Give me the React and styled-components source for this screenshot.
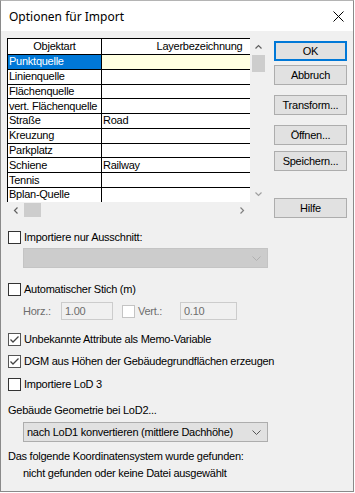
import styled, { createGlobalStyle } from "styled-components";

const GlobalStyle = createGlobalStyle`
  body {
    margin: 0;
    background: #ffffff;
    font-family: "Liberation Sans", Arial, sans-serif;
    font-size: 11px;
    letter-spacing: -0.25px;
    color: #000;
  }
`;

const Window = styled.div`
  box-sizing: border-box;
  width: 354px;
  height: 492px;
  border: 1px solid #8a8a8a;
  border-top-color: #b4b4b4;
  display: flex;
  flex-direction: column;
  background: #f0f0f0;
`;

const TitleBar = styled.div`
  height: 30px;
  background: #ffffff;
  display: flex;
  align-items: center;
  justify-content: space-between;
  padding: 0 9px 0 8px;
`;

const Title = styled.span`
  font-family: "Segoe UI", "Noto Sans", sans-serif;
  font-size: 12px;
  letter-spacing: 0;
  color: #000;
`;

const Client = styled.div`
  flex: 1;
  padding: 7px 0 0 6px;
  display: flex;
  flex-direction: column;
`;

const TopRow = styled.div`
  display: flex;
  gap: 7px;
`;

const GridBox = styled.div`
  width: 260px;
  height: 180px;
  display: grid;
  grid-template-columns: 243px 17px;
  grid-template-rows: 164px 16px;
`;

const GridBody = styled.div`
  background: #ffffff;
  overflow: hidden;
`;

const Row = styled.div`
  display: flex;
  box-sizing: border-box;
  height: ${(p) => (p.$header ? "17px" : "14.78px")};
  border-top: ${(p) => (p.$header ? "1px solid #000" : "none")};
  border-bottom: 1px solid #000;
  width: 300px;
`;

const Cell = styled.div`
  box-sizing: border-box;
  flex: none;
  width: ${(p) => (p.$first ? "95px" : "200px")};
  border-left: ${(p) => (p.$first ? "1px solid #000" : "none")};
  border-right: ${(p) => (p.$first ? "1px solid #000" : "none")};
  padding-left: ${(p) => (p.$center ? "0" : "1px")};
  display: flex;
  align-items: center;
  justify-content: ${(p) => (p.$center ? "center" : "flex-start")};
  line-height: 13px;
  white-space: nowrap;
  overflow: hidden;
  background: ${(p) => p.$bg || "transparent"};
  color: ${(p) => p.$color || "#000"};
`;

const VScroll = styled.div`
  background: #f0f0f0;
  display: flex;
  flex-direction: column;
  align-items: center;
`;

const HScroll = styled.div`
  background: #f0f0f0;
  display: flex;
  align-items: center;
`;

const ArrowCell = styled.div`
  flex: none;
  width: 17px;
  height: ${(p) => (p.$h ? p.$h : "17px")};
  display: flex;
  align-items: center;
  justify-content: center;
`;

const VThumb = styled.div`
  width: 13px;
  height: 17px;
  background: #cdcdcd;
`;

const HThumb = styled.div`
  width: 17px;
  height: 14px;
  background: #cdcdcd;
`;

const Spacer = styled.div`
  flex: 1;
`;

const Corner = styled.div`
  background: #f0f0f0;
`;

const ButtonCol = styled.div`
  display: flex;
  flex-direction: column;
  padding-top: 3px;
`;

const Button = styled.div`
  box-sizing: border-box;
  width: 73px;
  height: 20px;
  margin-top: ${(p) => p.$mt || 0}px;
  background: #e1e1e1;
  border: ${(p) => (p.$default ? "2px solid #0078d7" : "1px solid #adadad")};
  display: flex;
  align-items: center;
  justify-content: center;
  color: #000;
`;

const Options = styled.div`
  display: flex;
  flex-direction: column;
  padding-left: 1px;
`;

const CheckRow = styled.div`
  display: flex;
  align-items: center;
  gap: 3px;
  height: 13px;
  margin-top: ${(p) => p.$mt || 0}px;
  line-height: 13px;
`;

const Box = styled.div`
  box-sizing: border-box;
  flex: none;
  width: ${(p) => p.$size || 13}px;
  height: ${(p) => p.$size || 13}px;
  background: #ffffff;
  border: 1px solid ${(p) => p.$border || "#333333"};
  display: flex;
  align-items: center;
  justify-content: center;
`;

const Combo = styled.div`
  box-sizing: border-box;
  width: 245px;
  height: 20px;
  margin: ${(p) => p.$mt || 0}px 0 0 15px;
  background: ${(p) => (p.$disabled ? "#cccccc" : "#e1e1e1")};
  border: 1px solid ${(p) => (p.$disabled ? "#c4c4c4" : "#adadad")};
  display: flex;
  align-items: center;
  justify-content: space-between;
  padding: 0 6px 0 3px;
  white-space: nowrap;
`;

const StitchRow = styled.div`
  display: flex;
  align-items: center;
  height: 18px;
  margin: 6px 0 0 15px;
  color: #6d6d6d;
`;

const FieldLabel = styled.span`
  width: ${(p) => p.$w}px;
  flex: none;
`;

const Field = styled.div`
  box-sizing: border-box;
  flex: none;
  width: ${(p) => p.$w}px;
  height: 18px;
  border: 1px solid #cccccc;
  background: #f0f0f0;
  padding-left: 3px;
  display: flex;
  align-items: center;
  color: #6d6d6d;
`;

const Text = styled.div`
  line-height: 13px;
  margin: ${(p) => p.$mt || 0}px 0 0 ${(p) => p.$ml || 0}px;
  white-space: nowrap;
`;

const Chevron = ({ dir = "down", color = "#606060" }) => {
  const pts = {
    up: "0.5,4.5 3.5,1.5 6.5,4.5",
    down: "0.5,1.5 3.5,4.5 6.5,1.5",
    left: "4.5,0.5 1.5,3.5 4.5,6.5",
    right: "1.5,0.5 4.5,3.5 1.5,6.5",
  }[dir];
  const vertical = dir === "up" || dir === "down";
  return (
    <svg width={vertical ? 7 : 6} height={vertical ? 6 : 7} viewBox={vertical ? "0 0 7 6" : "0 0 6 7"}>
      <polyline points={pts} fill="none" stroke={color} strokeWidth="1.2" />
    </svg>
  );
};

const ComboArrow = ({ color }) => (
  <svg width="9" height="5" viewBox="0 0 9 5">
    <polyline points="0.5,0.5 4.5,4.5 8.5,0.5" fill="none" stroke={color} strokeWidth="1" />
  </svg>
);

const CloseIcon = () => (
  <svg width="11" height="11" viewBox="0 0 11 11">
    <path d="M0.5 0.5 L10.5 10.5 M10.5 0.5 L0.5 10.5" stroke="#000" strokeWidth="1" />
  </svg>
);

const Check = ({ color = "#444" }) => (
  <svg width="11" height="11" viewBox="0 0 11 11">
    <polyline points="1.5,5.5 4,8 9.5,2.5" fill="none" stroke={color} strokeWidth="1.3" />
  </svg>
);

const rows = [
  ["Punktquelle", ""],
  ["Linienquelle", ""],
  ["Flächenquelle", ""],
  ["vert. Flächenquelle", ""],
  ["Straße", "Road"],
  ["Kreuzung", ""],
  ["Parkplatz", ""],
  ["Schiene", "Railway"],
  ["Tennis", ""],
  ["Bplan-Quelle", ""],
];

const CheckOption = ({ checked, mt, children }) => (
  <CheckRow $mt={mt}>
    <Box $border={checked ? "#555" : "#333"}>{checked && <Check />}</Box>
    <span>{children}</span>
  </CheckRow>
);

const App = () => {
  return (
    <>
      <GlobalStyle />
      <Window>
        <TitleBar>
          <Title>Optionen für Import</Title>
          <CloseIcon />
        </TitleBar>
        <Client>
          <TopRow>
            <GridBox>
              <GridBody>
                <Row $header>
                  <Cell $first $center>Objektart</Cell>
                  <Cell $center style={{ width: 195 }}>Layerbezeichnung</Cell>
                </Row>
                {rows.map(([name, layer], i) => (
                  <Row key={name}>
                    <Cell $first $bg={i === 0 ? "#0078d7" : undefined} $color={i === 0 ? "#fff" : undefined}>
                      {name}
                    </Cell>
                    <Cell $bg={i === 0 ? "#ffffe1" : undefined}>{layer}</Cell>
                  </Row>
                ))}
              </GridBody>
              <VScroll>
                <ArrowCell>
                  <Chevron dir="up" />
                </ArrowCell>
                <VThumb />
                <Spacer />
                <ArrowCell>
                  <Chevron dir="down" color="#a0a0a0" />
                </ArrowCell>
              </VScroll>
              <HScroll>
                <ArrowCell $h="16px">
                  <Chevron dir="left" />
                </ArrowCell>
                <HThumb />
                <Spacer />
                <ArrowCell $h="16px">
                  <Chevron dir="right" color="#808080" />
                </ArrowCell>
              </HScroll>
              <Corner />
            </GridBox>
            <ButtonCol>
              <Button $default>OK</Button>
              <Button $mt={4}>Abbruch</Button>
              <Button $mt={10}>Transform...</Button>
              <Button $mt={10}>Öffnen...</Button>
              <Button $mt={6}>Speichern...</Button>
              <Button $mt={27}>Hilfe</Button>
            </ButtonCol>
          </TopRow>
          <Options>
            <CheckOption mt={13}>Importiere nur Ausschnitt:</CheckOption>
            <Combo $disabled $mt={4}>
              <span />
              <ComboArrow color="#b0b0b0" />
            </Combo>
            <CheckOption mt={15}>Automatischer Stich (m)</CheckOption>
            <StitchRow>
              <FieldLabel $w={38}>Horz.:</FieldLabel>
              <Field $w={52}>1.00</Field>
              <Box $size={13} $border="#c4c4c4" style={{ marginLeft: 9 }} />
              <FieldLabel $w={42} style={{ paddingLeft: 3 }}>Vert.:</FieldLabel>
              <Field $w={57}>0.10</Field>
            </StitchRow>
            <CheckOption checked mt={13}>Unbekannte Attribute als Memo-Variable</CheckOption>
            <CheckOption checked mt={9}>DGM aus Höhen der Gebäudegrundflächen erzeugen</CheckOption>
            <CheckOption mt={10}>Importiere LoD 3</CheckOption>
            <Text $mt={13}>Gebäude Geometrie bei LoD2...</Text>
            <Combo $mt={5}>
              <span>nach LoD1 konvertieren (mittlere Dachhöhe)</span>
              <ComboArrow color="#555" />
            </Combo>
            <Text $mt={8}>Das folgende Koordinatensystem wurde gefunden:</Text>
            <Text $mt={4} $ml={15}>nicht gefunden oder keine Datei ausgewählt</Text>
          </Options>
        </Client>
      </Window>
    </>
  );
};

export default App;
